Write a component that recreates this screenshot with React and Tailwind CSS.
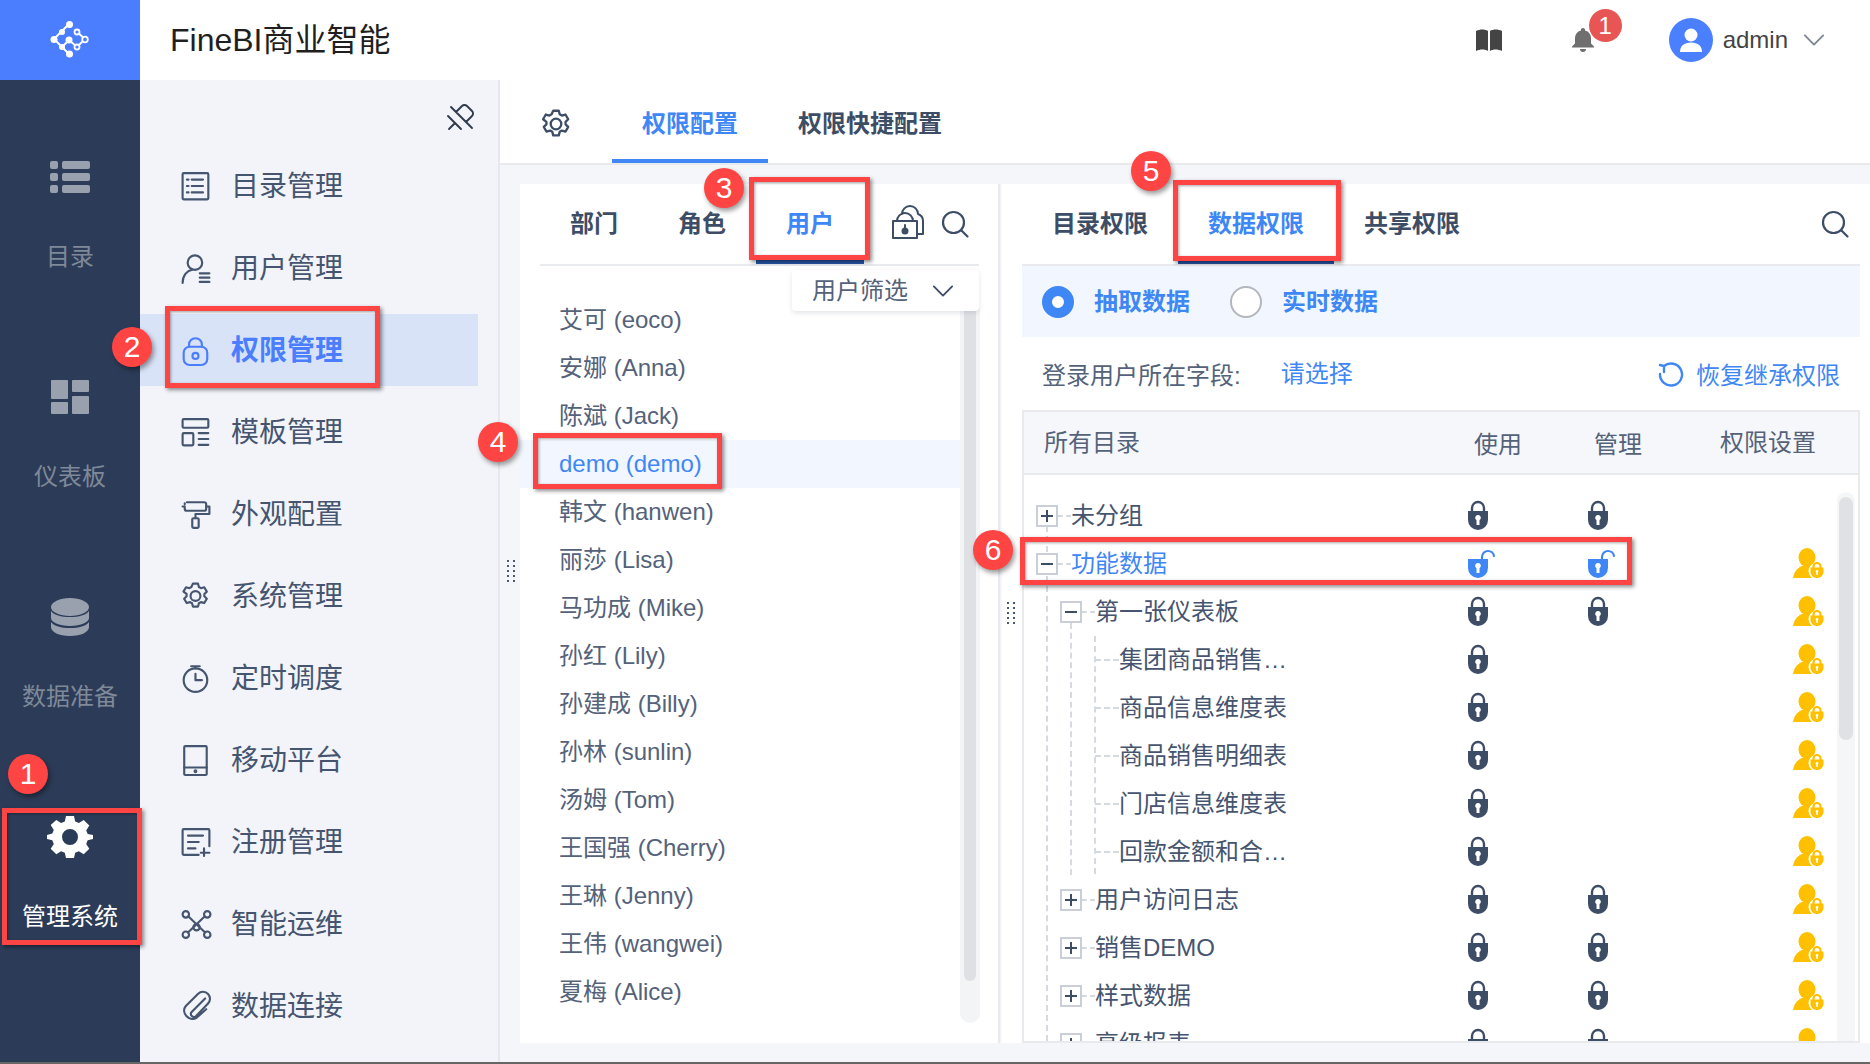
import { Fragment } from 'react'

const ANNOTATE_RED = 'border-[#ff4444]'

function Icon({ size = 26, h, vb = '0 0 26 26', stroke = 'currentColor', sw = 2, className = '', children }) {
  return (
    <svg width={size} height={h || size} viewBox={vb} fill="none" stroke={stroke} strokeWidth={sw} strokeLinecap="round" strokeLinejoin="round" className={`shrink-0 overflow-visible ${className}`}>
      {children}
    </svg>
  )
}

const gearPath =
  'M10.6 1.5h4.8l.8 3.1 1.9 1.1 3.1-.9 2.4 4.1-2.3 2.2v2.2l2.3 2.2-2.4 4.1-3.1-.9-1.9 1.1-.8 3.1h-4.8l-.8-3.1-1.9-1.1-3.1.9-2.4-4.1 2.3-2.2v-2.2L1.8 8.9l2.4-4.1 3.1.9 1.9-1.1z'

function GearOutline({ size = 26 }) {
  return (
    <Icon size={size}>
      <path d={gearPath} />
      <circle cx="13" cy="13" r="4.6" />
    </Icon>
  )
}

function SearchIcon() {
  return (
    <Icon size={28} vb="0 0 28 28" sw={2.2}>
      <circle cx="12.5" cy="12.5" r="10.5" />
      <path d="M20.5 20.5l6 6" />
    </Icon>
  )
}

function Chevron({ size = 24, className = '' }) {
  return (
    <Icon size={size} h={14} vb="0 0 24 14" className={className}>
      <path d="M2 2l10 10 10-10" />
    </Icon>
  )
}

const MENU_ICONS = {
  list: (
    <>
      <rect x="1" y="1" width="24" height="24.5" rx="1" />
      <path d="M5 7h1.5M9.5 7H20M5 13h1.5M9.5 13H20M5 19h1.5M9.5 19H20" />
    </>
  ),
  user: (
    <>
      <circle cx="12.5" cy="8" r="6.8" />
      <path d="M1 27c0-7 4-11.500 9-12.500" />
      <path d="M17 18h9M17 22h9M17 26h9" />
    </>
  ),
  lock: (
    <>
      <rect x="2" y="10" width="22" height="17" rx="5.500" />
      <path d="M7 10V8a6 6 0 0 1 12 0v2" />
      <circle cx="13" cy="18.500" r="2.800" />
    </>
  ),
  template: (
    <>
      <rect x="1" y="1" width="24" height="8" rx="1" />
      <rect x="1" y="14" width="10" height="11.500" rx="1" />
      <path d="M16 14h9M16 19.500h9M16 25h9" />
    </>
  ),
  roller: (
    <>
      <path d="M5 2h16a2 2 0 0 1 2 2v4a2 2 0 0 1-2 2H5a2 2 0 0 1-2-2V6H1M3 4V3" />
      <path d="M23 6h3v7H13v4" />
      <rect x="10" y="17" width="6" height="9" rx="1" />
    </>
  ),
  gear: (
    <>
      <path d={gearPath} />
      <circle cx="13" cy="13" r="4.600" />
    </>
  ),
  timer: (
    <>
      <circle cx="13" cy="15" r="11" />
      <path d="M9 2h8M13 2v2M13 9v6h6" />
    </>
  ),
  tablet: (
    <>
      <rect x="2.500" y="0" width="21" height="27" rx="1" />
      <path d="M2.500 20h21" />
      <circle cx="13" cy="23.500" r=".8" />
    </>
  ),
  register: (
    <>
      <path d="M16 25H2a1 1 0 0 1-1-1V2a1 1 0 0 1 1-1h23a1 1 0 0 1 1 1v15" />
      <path d="M6 7h14M6 13h10M6 19h7M21 19v7M18 23h8" />
    </>
  ),
  nodes: (
    <>
      <circle cx="4" cy="4" r="3" />
      <circle cx="24" cy="4" r="3" />
      <circle cx="4" cy="23" r="3" />
      <circle cx="24" cy="23" r="3" />
      <circle cx="14" cy="16" r="3" />
      <path d="M6.500 6L22 21M21.500 6L6 21" />
    </>
  ),
  clip: (
    <>
      <path d="M22 6L9 19a3 3 0 0 0 4 4L24.500 11a6.500 6.500 0 0 0-9-9.500L4 13c-5 6 3 15 10 11l9-8" />
    </>
  ),
}

const MENU = [
  ['目录管理', 'list'],
  ['用户管理', 'user'],
  ['权限管理', 'lock'],
  ['模板管理', 'template'],
  ['外观配置', 'roller'],
  ['系统管理', 'gear'],
  ['定时调度', 'timer'],
  ['移动平台', 'tablet'],
  ['注册管理', 'register'],
  ['智能运维', 'nodes'],
  ['数据连接', 'clip'],
]

const USERS = [
  '艾可 (eoco)', '安娜 (Anna)', '陈斌 (Jack)', 'demo (demo)', '韩文 (hanwen)', '丽莎 (Lisa)', '马功成 (Mike)', '孙红 (Lily)',
  '孙建成 (Billy)', '孙林 (sunlin)', '汤姆 (Tom)', '王国强 (Cherry)', '王琳 (Jenny)', '王伟 (wangwei)', '夏梅 (Alice)',
]

// level, expander, label, use lock, manage lock, user icon
const TREE = [
  { level: 1, box: '+', name: '未分组', use: 1, manage: 1 },
  { level: 1, box: '-', name: '功能数据', use: 2, manage: 2, person: 1, active: 1 },
  { level: 2, box: '-', name: '第一张仪表板', use: 1, manage: 1, person: 1 },
  { level: 3, name: '集团商品销售…', use: 1, person: 1 },
  { level: 3, name: '商品信息维度表', use: 1, person: 1 },
  { level: 3, name: '商品销售明细表', use: 1, person: 1 },
  { level: 3, name: '门店信息维度表', use: 1, person: 1 },
  { level: 3, name: '回款金额和合…', use: 1, person: 1 },
  { level: 2, box: '+', name: '用户访问日志', use: 1, manage: 1, person: 1 },
  { level: 2, box: '+', name: '销售DEMO', use: 1, manage: 1, person: 1 },
  { level: 2, box: '+', name: '样式数据', use: 1, manage: 1, person: 1 },
  { level: 2, box: '+', name: '高级报表', use: 1, manage: 1, person: 1 },
]

const INDENT = { 1: 'pl-[12px]', 2: 'pl-[36px]', 3: 'pl-[71px]' }

function Rail() {
  const items = [
    {
      label: '目录',
      icon: (
        <svg width="40" height="32" viewBox="0 0 40 32" fill="#99a1af">
          <rect y="0" width="8" height="8" rx="2" /><rect x="12" y="0" width="28" height="8" rx="2" />
          <rect y="12" width="8" height="8" rx="2" /><rect x="12" y="12" width="28" height="8" rx="2" />
          <rect y="24" width="8" height="8" rx="2" /><rect x="12" y="24" width="28" height="8" rx="2" />
        </svg>
      ),
    },
    {
      label: '仪表板',
      icon: (
        <svg width="38" height="34" viewBox="0 0 38 34" fill="#99a1af">
          <rect width="17" height="19" rx="1" /><rect x="21" width="17" height="12" rx="1" />
          <rect y="22" width="17" height="12" rx="1" /><rect x="21" y="16" width="17" height="18" rx="1" />
        </svg>
      ),
    },
    {
      label: '数据准备',
      icon: (
        <svg width="38" height="38" viewBox="0 0 38 38" fill="#99a1af">
          <ellipse cx="19" cy="9" rx="19" ry="9" />
          <path d="M0 13c3 4 10 6 19 6s16-2 19-6v7c0 4-8 8-19 8S0 24 0 20z" />
          <path d="M0 24c3 4 10 6 19 6s16-2 19-6v5c0 5-8 9-19 9S0 34 0 29z" />
        </svg>
      ),
    },
    {
      label: '管理系统',
      active: true,
      icon: (
        <svg width="42" height="42" viewBox="0 0 42 42" className="overflow-visible">
          <path
            fill="#fff"
            fillRule="evenodd"
            d="M17 0h8l1.200 5.600 3.700 1.500 4.800-3.100 5.600 5.600-3.100 4.800 1.500 3.700L44 19v4l-5.300 1.200-1.500 3.700 3.100 4.800-5.600 5.600-4.800-3.100-3.700 1.500L25 42h-8l-1.200-5.300-3.700-1.500-4.800 3.100-5.600-5.600 3.100-4.800-1.500-3.700L-2 23v-4l5.300-1.400 1.500-3.700-3.100-4.800L7.300 4l4.800 3.100 3.700-1.500zM21 13a8 8 0 1 0 0 16 8 8 0 0 0 0-16z"
          />
        </svg>
      ),
    },
  ]
  return (
    <div className="w-[140px] shrink-0 bg-[#2c3c58] flex flex-col">
      <div className="h-[80px] bg-[#4a7eff] flex items-center justify-center">
        <svg width="60" height="60" viewBox="40 10 60 60" fill="none" stroke="#fff" strokeWidth="2">
          <path d="M69 24L54 39l15 15M62 47l7-7 8 7 8-8-8-7" />
          <g fill="#fff" stroke="none">
            <circle cx="69.500" cy="24.500" r="3.500" />
            <circle cx="62" cy="32" r="3" />
            <circle cx="54" cy="39.500" r="3.500" />
            <circle cx="69" cy="40" r="3.500" />
            <circle cx="62" cy="47" r="3" />
            <circle cx="69.500" cy="54" r="3.500" />
          </g>
          <g fill="#4a7eff" strokeWidth="1.800">
            <circle cx="77" cy="32" r="2.500" />
            <circle cx="85" cy="39.500" r="2.800" />
            <circle cx="77" cy="47" r="2.500" />
          </g>
        </svg>
      </div>
      <div className="pt-[73px]">
        {items.map((it) => (
          <div key={it.label} className="h-[220px] flex flex-col items-center">
            <div className="h-[48px] flex items-center justify-center">{it.icon}</div>
            <div className={`mt-[40px] text-[24px] leading-[32px] ${it.active ? 'text-white' : 'text-[#7f8998]'}`}>{it.label}</div>
          </div>
        ))}
      </div>
    </div>
  )
}

function Sidebar() {
  return (
    <div className="w-[360px] shrink-0 bg-[#f2f4f9] border-r-2 border-[#e6e8ee]">
      <div className="h-[65px] flex items-center justify-end pr-[23px] pt-[8px]">
        <Icon size={28} vb="0 0 28 28" sw={1.900} className="text-[#2f3a4d]">
          <path d="M1 13L14 26M9 9l6-6a3.500 3.500 0 0 1 5 0l5 5a3.500 3.500 0 0 1 0 5l-6 6M2 26l5-5M4 4l21 21" />
        </Icon>
      </div>
      {MENU.map(([label, key]) => {
        const active = key === 'lock'
        return (
          <div key={label} className="h-[82px] flex items-center">
            <div className={`w-[338px] h-[72px] flex items-center pl-[41px] gap-[20px] ${active ? 'bg-[#d8e3f7] text-[#4a7eff]' : 'text-[#46556f]'}`}>
              <Icon size={30} vb="0 -1 27 28">{MENU_ICONS[key]}</Icon>
              <span className={`text-[28px] leading-none pt-[2px] ${active ? 'font-bold' : ''}`}>{label}</span>
            </div>
          </div>
        )
      })}
    </div>
  )
}

function Header() {
  return (
    <div className="h-[80px] shrink-0 bg-white flex items-center pl-[30px]">
      <span className="text-[32px] text-[#1f1f1f] leading-none">FineBI商业智能</span>
      <div className="ml-auto flex items-center pr-[45px]">
        <svg width="26" height="23" viewBox="0 0 26 23" fill="#444">
          <path d="M0 2c4-2 9-2 12 0v20c-3-2-8-2-12 0zM14 2c3-2 8-2 12 0v20c-4-2-9-2-12 0z" />
        </svg>
        <div className="relative ml-[70px] w-[22px] h-[24px]">
          <svg width="22" height="25" viewBox="0 0 22 25" fill="#6f6f6f">
            <path d="M11 0a2 2 0 0 1 2 2.500c4 1 6 4 6 8v5l3 3v1H0v-1l3-3v-5c0-4 2-7 6-8A2 2 0 0 1 11 0zM8 21h6a3 3 0 0 1-6 0z" />
          </svg>
          <span className="absolute -top-[19px] left-[17px] w-[33px] h-[33px] rounded-full bg-[#e85555] text-white text-[24px] leading-[33px] text-center">1</span>
        </div>
        <div className="ml-[75px] w-[44px] h-[44px] rounded-full bg-[#4a80ff] flex items-center justify-center">
          <svg width="22" height="24" viewBox="0 0 22 24" fill="#fff">
            <circle cx="11" cy="7" r="6.500" />
            <path d="M0 24c0-6 4-9.500 11-9.500S22 18 22 24z" />
          </svg>
        </div>
        <span className="ml-[10px] text-[24px] text-[#444] leading-none">admin</span>
        <Chevron size={22} className="ml-[15px] text-[#7d8794]" />
      </div>
    </div>
  )
}

function DragHandle({ className = '' }) {
  return (
    <div className={`absolute grid grid-cols-2 gap-x-[4px] gap-y-[3px] ${className}`}>
      {Array.from({ length: 10 }).map((_, i) => (
        <span key={i} className="w-[2px] h-[2px] bg-[#4a5872]" />
      ))}
    </div>
  )
}

function UserPanel() {
  return (
    <div className="relative w-[480px] shrink-0 bg-white border-r-2 border-[#e8eaee] flex flex-col">
      <div className="ml-[20px] mr-[19px] h-[82px] shrink-0 border-b-2 border-[#e8eaee] flex items-center">
        {['部门', '角色', '用户'].map((t) => (
          <div
            key={t}
            className={`w-[108px] h-full flex items-center justify-center text-[24px] font-bold ${t === '用户' ? 'text-[#3f87f5] border-b-4 border-[#2755a8] pt-[4px]' : 'text-[#3d4d66]'}`}
          >
            {t}
          </div>
        ))}
        <Icon size={32} vb="0 0 32 32" className="ml-[28px] text-[#3d4d66]">
          <rect x="1" y="13" width="24" height="17" />
          <path d="M5 13a8 8 0 0 1 16 0M10 6a8 8 0 0 1 16 0c3 1 5 3 5 7v13h-6" />
          <circle cx="13" cy="23" r="2.500" fill="currentColor" />
          <path d="M13 17v4" />
        </Icon>
        <div className="ml-[17px] text-[#3d4d66]"><SearchIcon /></div>
      </div>
      <div className="relative flex-1 flex min-h-0">
        <div className="w-[441px] pt-[30px]">
          {USERS.map((u) => {
            const on = u.startsWith('demo')
            return (
              <div key={u} className={`h-[48px] pl-[39px] flex items-center text-[24px] ${on ? 'bg-[#f2f6fe] text-[#3f87f5]' : 'text-[#54627a]'}`}>
                {u}
              </div>
            )
          })}
        </div>
        <div className="mt-[42px] ml-[-1px] w-[20px] h-[715px] rounded-b-[10px] bg-[#f3f4f6] px-[4px]">
          <div className="h-[673px] rounded-b-[6px] bg-[#dee0e4]" />
        </div>
        <div className="absolute right-[19px] top-[4px] w-[187px] h-[41px] bg-white rounded-[4px] shadow-[0_2px_5px_rgba(60,70,90,0.14)] flex items-center pl-[20px] text-[24px] text-[#54627a]">
          用户筛选
          <Chevron size={22} className="ml-[24px] text-[#3d4d66]" />
        </div>
      </div>
    </div>
  )
}

function Lock({ open }) {
  if (open) {
    return (
      <svg width="28" height="30" viewBox="0 0 28 30">
        <path d="M14 13V9a6 6 0 0 1 6-6 6 6 0 0 1 6 5" fill="none" stroke="#3f87f5" strokeWidth="2.200" strokeLinecap="round" />
        <path fillRule="evenodd" fill="#3f87f5" d="M0 11h20v9a10 10 0 0 1-20 0zM10 15a2.800 2.800 0 0 0-1.500 5.200V25h3v-4.800A2.800 2.800 0 0 0 10 15z" />
      </svg>
    )
  }
  return (
    <svg width="20" height="30" viewBox="0 0 20 30">
      <path d="M4 12V8a6 6 0 0 1 12 0v4" fill="none" stroke="#3d4d66" strokeWidth="2.400" />
      <path fillRule="evenodd" fill="#3d4d66" d="M0 11h20v9a10 10 0 0 1-20 0zM10 15a2.800 2.800 0 0 0-1.500 5.200V25h3v-4.800A2.800 2.800 0 0 0 10 15z" />
    </svg>
  )
}

function PersonLock() {
  return (
    <svg width="31" height="30" viewBox="0 0 31 30" fill="#ffc000">
      <ellipse cx="14" cy="9.500" rx="8.500" ry="9.500" />
      <path d="M0 30c1-6 4-10 9-12h10v12z" />
      <circle cx="24" cy="23" r="8.500" fill="#fff" />
      <path d="M20.500 20v-1.500a3.500 3.500 0 0 1 7 0V20" fill="none" stroke="#ffc000" strokeWidth="2.200" />
      <path fillRule="evenodd" d="M17.500 19.500h13V24a6 6 0 0 1-6 6h-1a6 6 0 0 1-6-6zM24 22a1.300 1.300 0 0 0-.8 2.400V27h1.600v-2.600A1.300 1.300 0 0 0 24 22z" />
    </svg>
  )
}

function TreeRow({ node }) {
  const { level, box, name, use, manage, person, active } = node
  return (
    <div className="h-[48px] shrink-0 grid grid-cols-[414px_120px_120px_1fr] items-center">
      <div className={`flex items-center pt-[1px] ${INDENT[level]}`}>
        {box ? (
          <span className="relative z-10 w-[22px] h-[22px] shrink-0 border-2 border-[#c9ced8] bg-white flex items-center justify-center">
            <span className="absolute w-[12px] h-[2px] bg-[#3d4d66]" />
            {box === '+' && <span className="absolute w-[2px] h-[12px] bg-[#3d4d66]" />}
          </span>
        ) : null}
        <span className={`border-t-2 border-dashed border-[#d5d9e0] ${level === 3 ? 'w-[24px]' : 'w-[13px]'}`} />
        <span className={`text-[24px] whitespace-nowrap ${active ? 'text-[#3f87f5]' : 'text-[#46556f]'}`}>{name}</span>
      </div>
      <div className="pl-[30px] flex items-center h-[30px]">{use ? <Lock open={use === 2} /> : null}</div>
      <div className="pl-[30px] flex items-center h-[30px]">{manage ? <Lock open={manage === 2} /> : null}</div>
      <div className="pl-[115px] flex items-center h-[30px]">{person ? <PersonLock /> : null}</div>
    </div>
  )
}

function DataPanel() {
  return (
    <div className="relative flex-1 ml-[2px] bg-white pl-[20px] pr-[10px] flex flex-col min-w-0">
      <div className="h-[82px] shrink-0 border-b-2 border-[#e8eaee] flex items-center">
        {['目录权限', '数据权限', '共享权限'].map((t) => (
          <div
            key={t}
            className={`w-[156px] h-full flex items-center justify-center text-[24px] font-bold ${t === '数据权限' ? 'text-[#3f87f5] border-b-4 border-[#2755a8] pt-[4px]' : 'text-[#3d4d66]'}`}
          >
            {t}
          </div>
        ))}
        <div className="ml-auto mr-[11px] text-[#3d4d66]"><SearchIcon /></div>
      </div>
      <div className="h-[71px] shrink-0 bg-[#f2f6fe] flex items-center pl-[20px]">
        <span className="w-[32px] h-[32px] rounded-full border-[10px] border-[#3f87f5] bg-white" />
        <span className="ml-[20px] text-[24px] font-bold text-[#3f87f5]">抽取数据</span>
        <span className="ml-[40px] w-[32px] h-[32px] rounded-full border-2 border-[#b3b6bc] bg-white" />
        <span className="ml-[20px] text-[24px] font-bold text-[#3f87f5]">实时数据</span>
      </div>
      <div className="h-[73px] shrink-0 flex items-center pl-[20px] pr-[20px] pt-[4px] text-[24px]">
        <span className="text-[#54627a]">登录用户所在字段:</span>
        <span className="ml-[40px] text-[#3f87f5] -mt-[4px]">请选择</span>
        <div className="ml-auto flex items-center gap-[12px] text-[#3f87f5]">
          <Icon size={26} vb="0 0 26 26" sw={2.400}>
            <path d="M6 3a11 11 0 1 1-4 8M2 2l4 1v6" />
          </Icon>
          恢复继承权限
        </div>
      </div>
      <div className="flex-1 min-h-0 border-2 border-[#e8eaee] flex flex-col">
        <div className="h-[63px] shrink-0 bg-[#f5f7fa] border-b-2 border-[#e8eaee] pt-[4px] grid grid-cols-[414px_120px_120px_180px] items-center text-[24px] text-[#54627a]">
          <span className="pl-[20px] -mt-[4px]">所有目录</span>
          <span className="text-center">使用</span>
          <span className="text-center">管理</span>
          <span className="text-center -mt-[4px]">权限设置</span>
        </div>
        <div className="relative flex-1 min-h-0 flex overflow-hidden">
          <span className="absolute left-[22px] top-[51px] bottom-0 border-l-2 border-dashed border-[#d5d9e0]" />
          <span className="absolute left-[46px] top-[148px] h-[252px] border-l-2 border-dashed border-[#d5d9e0]" />
          <span className="absolute left-[70px] top-[161px] h-[238px] border-l-2 border-dashed border-[#d5d9e0]" />
          <div className="flex-1 min-w-0 flex flex-col pt-[16px]">
            {TREE.map((n) => (
              <Fragment key={n.name}>
                <TreeRow node={n} />
              </Fragment>
            ))}
          </div>
          <div className="w-[18px] shrink-0 ml-[-1px] mr-[3px] mt-[17px] bg-[#f5f6f7] rounded-t-[9px] px-[2px] pt-[5px]">
            <div className="h-[243px] rounded-[7px] bg-[#dfe1e5]" />
          </div>
        </div>
      </div>
    </div>
  )
}

function Badge({ n, className }) {
  return (
    <span className={`absolute w-[40px] h-[40px] rounded-full bg-[#ff4444] text-white text-[30px] leading-[40px] text-center shadow-[2px_3px_5px_rgba(0,0,0,0.4)] ${className}`}>
      {n}
    </span>
  )
}

function Box({ className }) {
  return <div className={`absolute border-[5px] ${ANNOTATE_RED} shadow-[2px_2px_4px_rgba(0,0,0,0.45),inset_1px_1px_3px_rgba(0,0,0,0.35)] ${className}`} />
}

function Annotations() {
  return (
    <>
      <Box className="left-[2px] top-[808px] w-[140px] h-[137px]" />
      <Box className="left-[165px] top-[306px] w-[215px] h-[82px]" />
      <Box className="left-[749px] top-[177px] w-[121px] h-[83px]" />
      <Box className="left-[533px] top-[433px] w-[189px] h-[56px]" />
      <Box className="left-[1173px] top-[180px] w-[168px] h-[81px]" />
      <Box className="left-[1020px] top-[537px] w-[612px] h-[48px]" />
      <Badge n={1} className="left-[8px] top-[754px]" />
      <Badge n={2} className="left-[112px] top-[327px]" />
      <Badge n={3} className="left-[704px] top-[168px]" />
      <Badge n={4} className="left-[478px] top-[422px]" />
      <Badge n={5} className="left-[1131px] top-[151px]" />
      <Badge n={6} className="left-[973px] top-[530px]" />
      <div className="absolute left-0 right-0 bottom-0 h-[2px] bg-[#666]" />
    </>
  )
}

export default function App() {
  return (
    <div className="relative w-[1870px] h-[1064px] overflow-hidden flex bg-white font-['Liberation_Sans','Noto_Sans_CJK_SC',sans-serif]">
      <Rail />
      <div className="flex-1 min-w-0 flex flex-col">
        <Header />
        <div className="flex-1 min-h-0 flex">
          <Sidebar />
          <div className="relative flex-1 min-w-0 flex flex-col">
            <div className="h-[85px] shrink-0 bg-white border-b-2 border-[#e8eaee] flex items-center pl-[41px]">
              <div className="text-[#3d4d66] mt-[4px]"><GearOutline size={30} /></div>
              <div className="ml-[41px] w-[156px] h-full flex items-center justify-center text-[24px] font-bold text-[#3f87f5] border-b-4 border-[#3f87f5] pt-[8px]">权限配置</div>
              <div className="w-[204px] h-full flex items-center justify-center text-[24px] font-bold text-[#3d4d66] pt-[4px]">权限快捷配置</div>
            </div>
            <div className="relative flex-1 min-h-0 flex bg-[#f5f6f9] pt-[19px] pb-[21px] pl-[20px]">
              <UserPanel />
              <DataPanel />
              <DragHandle className="left-[7px] top-[395px]" />
              <DragHandle className="left-[507px] top-[437px]" />
            </div>
          </div>
        </div>
      </div>
      <Annotations />
    </div>
  )
}
